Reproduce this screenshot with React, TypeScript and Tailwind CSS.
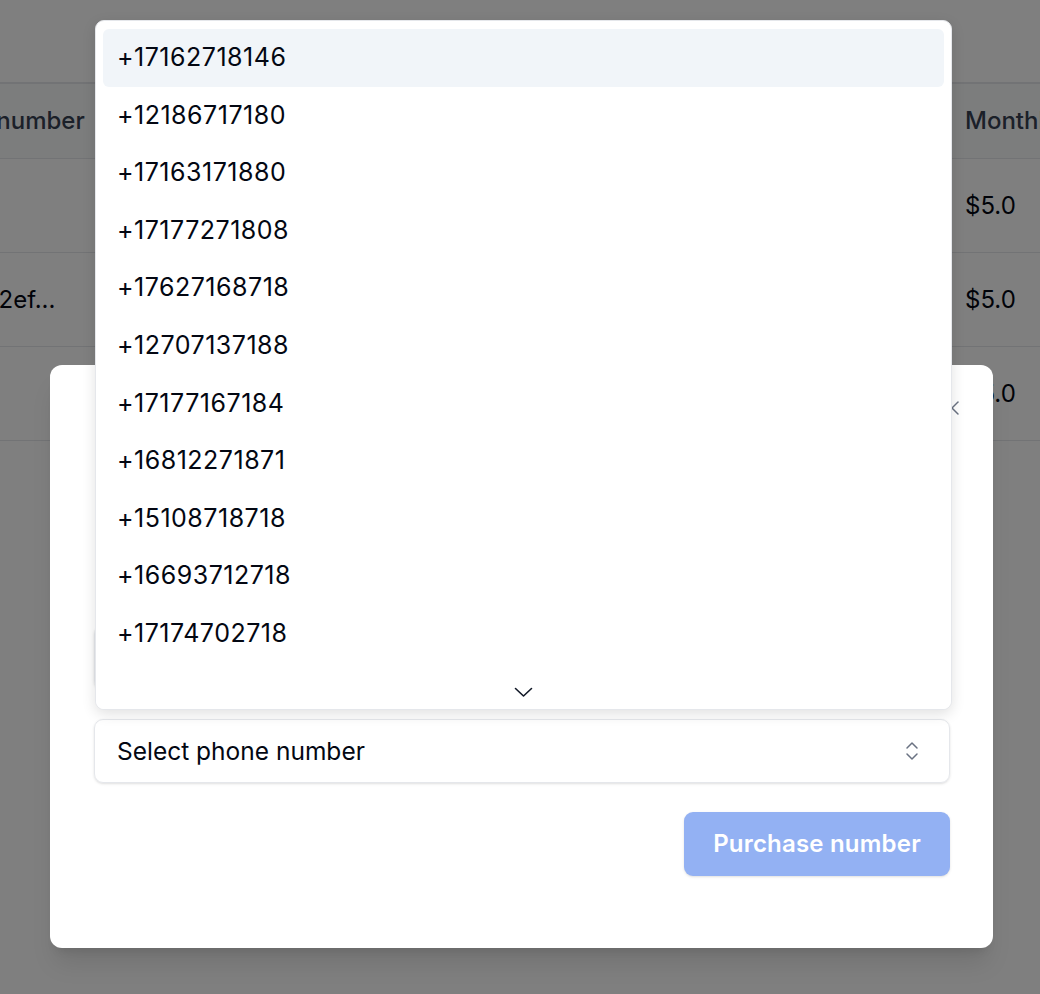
import { ChevronsUpDown, X } from "lucide-react";

const numbers = [
  "+17162718146",
  "+12186717180",
  "+17163171880",
  "+17177271808",
  "+17627168718",
  "+12707137188",
  "+17177167184",
  "+16812271871",
  "+15108718718",
  "+16693712718",
  "+17174702718",
  "+17162711870",
];

const rows = [
  { sid: "", cost: "$5.0" },
  { sid: "c8a41d2ef...", cost: "$5.0" },
  { sid: "", cost: "$5.0" },
];

export default function App() {
  return (
    <div
      className="relative w-[1040px] h-[994px] overflow-hidden bg-white text-gray-950"
      style={{ fontFamily: "Inter, 'Noto Sans', sans-serif" }}
    >
      {/* page behind the dialog */}
      <div className="pt-[82px]">
        <div className="-ml-[83px] w-[1123px] border-t-2 border-gray-200">
          <div className="flex h-[75px] items-center border-b border-gray-200 bg-gray-50 text-[24px] font-medium text-gray-700">
            <div className="flex-1 whitespace-nowrap">Phone number</div>
            <div className="w-[75px] overflow-hidden whitespace-nowrap">Monthly cost</div>
          </div>
          {rows.map((row, i) => (
            <div
              key={i}
              className="flex h-[94px] items-center border-b border-gray-200 text-[24px] text-gray-950"
            >
              <div className="flex-1 whitespace-nowrap">{row.sid}</div>
              <div className="w-[75px] overflow-hidden whitespace-nowrap">{row.cost}</div>
            </div>
          ))}
        </div>
      </div>

      {/* overlay */}
      <div className="absolute inset-0 bg-black/50" />

      {/* dialog */}
      <div className="absolute left-[50px] top-[365px] w-[943px] rounded-[12px] bg-white pl-[44px] pr-[43px] pt-[32px] pb-[72px] shadow-xl">
        <button className="absolute right-[29px] top-[31px] text-gray-500">
          <X size={24} strokeWidth={1.5} />
        </button>
        <div className="h-[228px]" />
        <div className="h-[65px] rounded-[9px] border border-gray-200 shadow-sm" />
        <div className="mt-[29px] flex h-[64px] items-center justify-between rounded-[9px] border border-gray-200 pl-[22px] pr-[25px] text-[24.5px] shadow-sm">
          <span>Select phone number</span>
          <ChevronsUpDown size={24} strokeWidth={1.5} className="text-gray-500" />
        </div>
        <div className="mt-[29px] flex justify-end">
          <button className="h-[64px] w-[266px] rounded-[9px] bg-[#93b1f3] text-[24px] font-semibold tracking-[0.2px] text-white shadow-sm">
            Purchase number
          </button>
        </div>
      </div>

      {/* open select list */}
      <div className="absolute left-[95px] top-[20px] flex h-[690px] w-[857px] flex-col overflow-hidden rounded-[9px] border border-gray-200 bg-white shadow-[0_4px_14px_rgba(0,0,0,0.12)]">
        <div className="h-[641px] overflow-hidden px-[7px] pt-[8px]">
          {numbers.map((n, i) => (
            <div
              key={n}
              className={
                i === 0
                  ? "flex h-[57.6px] items-center rounded-[6px] bg-slate-100 px-[14px] text-[25px] tracking-[0.5px]"
                  : "flex h-[57.6px] items-center rounded-[6px] px-[14px] text-[25px] tracking-[0.5px]"
              }
            >
              {n}
            </div>
          ))}
        </div>
        <div className="flex flex-1 justify-center bg-white pt-[25px]">
          <svg width="19" height="11" viewBox="0 0 19 11" fill="none">
            <path d="M1.5 1.5 L9.5 9 L17.5 1.5" stroke="#111827" strokeWidth="1.6" strokeLinecap="round" strokeLinejoin="round" />
          </svg>
        </div>
      </div>
    </div>
  );
}
